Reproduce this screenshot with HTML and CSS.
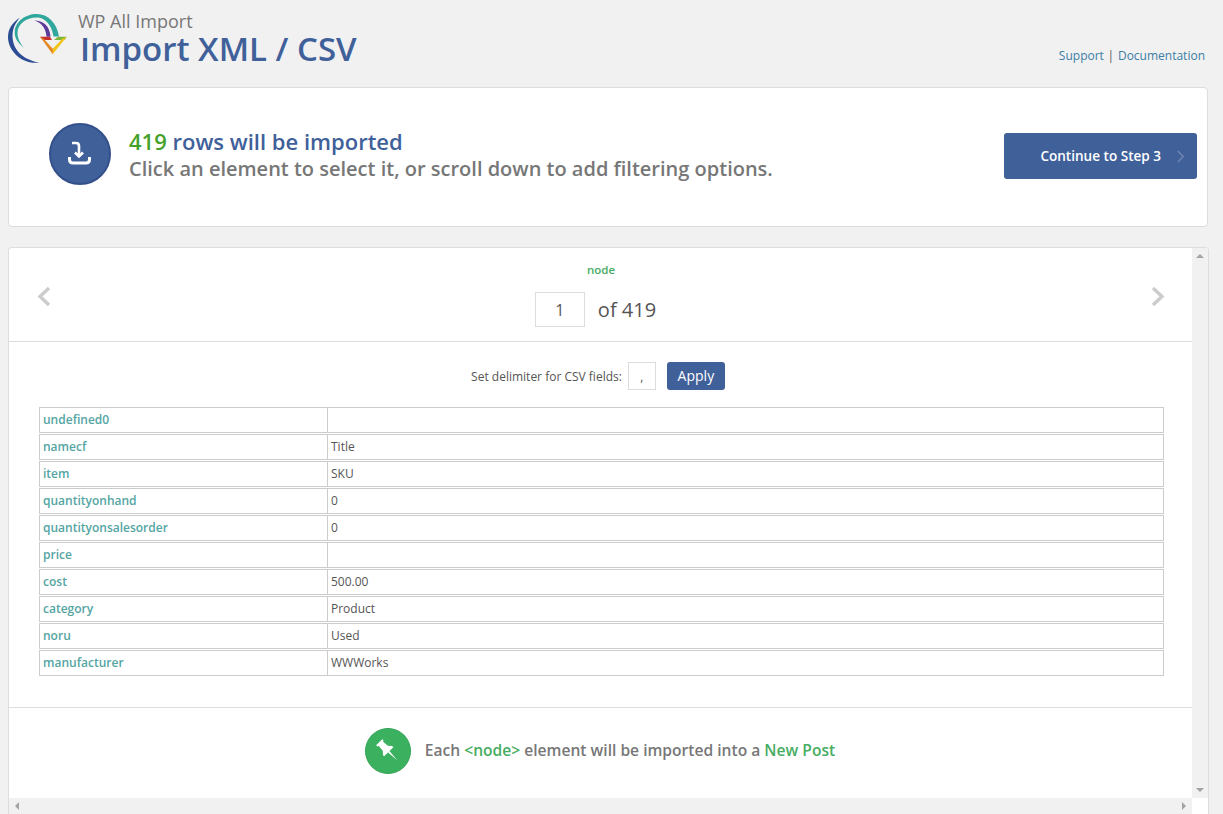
FILE: index.html
```html
<!DOCTYPE html>
<html lang="en">
<head>
<meta charset="utf-8">
<title>WP All Import</title>
<link rel="stylesheet" href="styles.css">
</head>
<body>
<header class="top">
  <svg class="logo" viewBox="0 0 59 52" width="59" height="52" fill="none">
    <path d="M12 4.500C4 10 0 16 0 24C0 38 14 52 31.500 49.500C20 48 4 40 4.500 22C4.700 15 8 9 12 4.500Z" fill="#2c4c93"/>
    <path d="M17.500 36C11 31 6.500 26 6.700 19C7 9 17 1 28.700 1C40 1 49 10 51 23.500L45.500 23.500C44 12 37 4.500 28.700 4.500C18 4.500 9.500 11 9.500 20C9.500 26 13 32 17.500 36Z" fill="#2fa79d"/>
    <path d="M26 7.500C35 7.500 42 13 42.500 23.700L38.500 23.700C38 15 33 9 26 7.500Z" fill="#5b3a9a"/>
    <path d="M32 23.700L42 23.700L44 27L35 27Z" fill="#c8312e"/>
    <path d="M50 23.700L58.700 23.700L56.500 27L46 27Z" fill="#7ab53a"/>
    <path d="M58.700 23.700L44.700 41.300L43.500 37L54 26Z" fill="#f0c419"/>
    <path d="M32 23.700L44.700 41.300L45 36L36 26Z" fill="#e58a25"/>
  </svg>
  <div class="titles">
    <div class="kicker">WP All Import</div>
    <h1 class="title">Import XML / CSV</h1>
  </div>
  <nav class="links"><a>Support</a> | <a>Documentation</a></nav>
</header>

<section class="summary">
  <span class="badge">
    <svg viewBox="0 0 32 32" width="32" height="32" fill="none" stroke="#fff" stroke-width="2.600">
      <path d="M8 5H12Q15 5 15 8V18"/>
      <path d="M11 14.500L15 18.500L19 14.500"/>
      <path d="M5.500 19V21.500Q5.500 25 9 25H22Q25.500 25 25.500 21.500V19" stroke-width="3"/>
    </svg>
  </span>
  <div class="summary-text">
    <div class="count"><span class="num">419</span> rows will be imported</div>
    <div class="hint">Click an element to select it, or scroll down to add filtering options.</div>
  </div>
  <a class="continue">Continue to Step 3
    <svg viewBox="0 0 10 16" width="9" height="15" fill="none" stroke="#7187b5" stroke-width="1.600"><path d="M2 2L8 8L2 14"/></svg>
  </a>
</section>

<section class="panel">
  <div class="view">
    <div class="pager">
      <svg class="arrow" viewBox="0 0 16 24" width="16" height="24" fill="none" stroke="#ccc" stroke-width="3.400"><path d="M13 3L4 11.500L13 20"/></svg>
      <div class="pager-mid">
        <div class="tag">node</div>
        <div class="pos"><span class="pos-input">1</span><span>of 419</span></div>
      </div>
      <svg class="arrow" viewBox="0 0 16 24" width="16" height="24" fill="none" stroke="#ccc" stroke-width="3.400"><path d="M3 3L12 11.500L3 20"/></svg>
    </div>
    <div class="delim">
      <span>Set delimiter for CSV fields:</span>
      <span class="delim-input">,</span>
      <a class="apply">Apply</a>
    </div>
    <table class="data">
      <tr><td>undefined0</td><td></td></tr>
      <tr><td>namecf</td><td>Title</td></tr>
      <tr><td>item</td><td>SKU</td></tr>
      <tr><td>quantityonhand</td><td>0</td></tr>
      <tr><td>quantityonsalesorder</td><td>0</td></tr>
      <tr><td>price</td><td></td></tr>
      <tr><td>cost</td><td>500.00</td></tr>
      <tr><td>category</td><td>Product</td></tr>
      <tr><td>noru</td><td>Used</td></tr>
      <tr><td>manufacturer</td><td>WWWorks</td></tr>
    </table>
    <div class="note">
      <span class="pin">
        <svg viewBox="0 0 24 24" width="26" height="26" fill="#fff">
          <g transform="rotate(-45 12 12)">
            <path d="M8 0.500H16V2.500H14.800L15.300 8.500L18 11.500V13H6V11.500L8.700 8.500L9.200 2.500H8Z"/>
            <path d="M11.100 13H12.900L12 24Z"/>
          </g>
        </svg>
      </span>
      <span>Each <b>&lt;node&gt;</b> element will be imported into a <b>New Post</b></span>
    </div>
  </div>
  <div class="vbar"><i class="tri up"></i><i class="tri down"></i></div>
  <div class="hbar"><i class="tri left"></i><i class="tri right"></i></div>
  <div class="corner"></div>
</section>
</body>
</html>
```
FILE: styles.css
```css
* { box-sizing: border-box; }
html, body { height: 100%; margin: 0; overflow: hidden; }
body {
  background: #f1f1f1;
  font-family: "Open Sans", sans-serif;
  color: #555;
  display: flex;
  flex-direction: column;
  padding: 0 14px 0 8px;
}
.top { height: 87px; flex: none; display: flex; padding-top: 13px; }
.logo { flex: none; }
.titles { margin-left: 11px; margin-top: -2px; }
.kicker { font-size: 18px; line-height: 21px; color: #777; }
.title { margin: -1px 0 0 2px; font-size: 33px; line-height: 36px; font-weight: 600; color: #40609a; }
.links { margin-left: auto; align-self: flex-end; font-size: 12px; line-height: 16px; margin-bottom: 23px; margin-right: 4px; color: #555; word-spacing: 0.6px; }
.links a { color: #3b7ea6; }

.summary {
  width: 1200px; height: 140px; flex: none;
  background: #fff; border: 1px solid #ddd; border-radius: 4px;
  display: flex; align-items: center;
  padding: 0 10px 0 40px;
}
.badge {
  width: 62px; height: 62px; border-radius: 50%; flex: none;
  background: #40609a; border: 2px solid #34508a;
  display: flex; align-items: center; justify-content: center;
  margin-bottom: 6px;
}
.summary-text { margin-left: 18px; margin-bottom: 6px; flex: 1; }
.count { font-size: 22px; line-height: 28px; font-weight: 600; color: #40609a; margin-bottom: 1px; }
.num { color: #46a12a; }
.hint { font-size: 20px; line-height: 26px; font-weight: 600; color: #777; }
.continue {
  width: 193px; height: 46px; flex: none; margin-bottom: 2px;
  background: #40609a; border-radius: 3px; color: #fff;
  font-size: 13.55px; font-weight: 600;
  display: flex; align-items: center; justify-content: flex-end; gap: 15px;
  padding: 0 12px 0 0;
}

.panel {
  margin-top: 20px; width: 1201px; flex: 1; min-height: 0;
  background: #fff; border: 1px solid #ddd; border-bottom: 0; border-radius: 4px 4px 0 0;
  display: grid; grid-template-columns: 1fr 16px; grid-template-rows: 1fr 16px;
}
.view { min-height: 0; overflow: hidden; display: flex; flex-direction: column; }
.pager {
  height: 94px; flex: none; border-bottom: 1px solid #ddd;
  display: flex; justify-content: space-between; align-items: center;
  padding: 0 26px 0 27px;
}
.arrow { margin-top: 5px; }
.pager-mid { display: flex; flex-direction: column; align-items: center; align-self: flex-start; padding-top: 14px; }
.tag { font-size: 11.5px; line-height: 16px; font-weight: 600; color: #46ad62; margin-bottom: 14px; }
.pos { display: flex; align-items: center; gap: 13px; font-size: 20px; color: #555; margin-right: 11px; }
.pos-input {
  width: 50px; height: 35px; border: 1px solid #ddd; background: #fff;
  font-size: 16px; color: #555; display: flex; align-items: center; justify-content: center;
}
.delim { display: flex; align-items: center; justify-content: center; height: 28px; margin-top: 20px; font-size: 12px; color: #555; padding-right: 5px; }
.delim-input {
  width: 28px; height: 28px; margin-left: 6px; border: 1px solid #ddd;
  font-size: 12px; display: flex; align-items: center; justify-content: center;
}
.apply {
  width: 58px; height: 28px; margin-left: 11px; border-radius: 3px;
  background: #40609a; color: #fff; font-size: 14px; padding-bottom: 2px;
  display: flex; align-items: center; justify-content: center;
}
.data {
  margin: 16px 0 0 30px; width: 1125px; flex: none;
  border-collapse: separate; border-spacing: 0 1px; table-layout: fixed;
  font-size: 12px; color: #555;
}
.data tr { height: 26px; }
.data td { border-top: 1px solid #ccc; border-bottom: 1px solid #ccc; border-right: 1px solid #ccc; padding: 0 3px 1px; }
.data td:first-child { width: 289px; border-left: 1px solid #ccc; color: #54a5a3; font-weight: 600; }
.note {
  margin-top: 30px; height: 84px; flex: none; border-top: 1px solid #ddd;
  display: flex; align-items: center; justify-content: center; gap: 14px;
  font-size: 15.6px; font-weight: 600; color: #777; padding: 2px 1px 0 0;
}
.note span:last-child { margin-top: -2px; }
.note b { font-weight: 600; color: #46ad62; }
.pin {
  width: 46px; height: 46px; border-radius: 50%; background: #3bb15f; border: 1px solid #34a356;
  display: flex; align-items: center; justify-content: center;
}
.vbar, .hbar { background: #f1f1f1; display: flex; justify-content: space-between; align-items: center; }
.vbar { flex-direction: column; padding: 6px 0; }
.hbar { padding: 0 6px; }
.corner { background: #fff; }
.tri { width: 0; height: 0; border-style: solid; display: block; }
.up { border-width: 0 4px 4px; border-color: transparent transparent #a3a3a3; }
.down { border-width: 4px 4px 0; border-color: #a3a3a3 transparent transparent; }
.left { border-width: 4px 4px 4px 0; border-color: transparent #a3a3a3 transparent transparent; }
.right { border-width: 4px 0 4px 4px; border-color: transparent transparent transparent #a3a3a3; }
```
